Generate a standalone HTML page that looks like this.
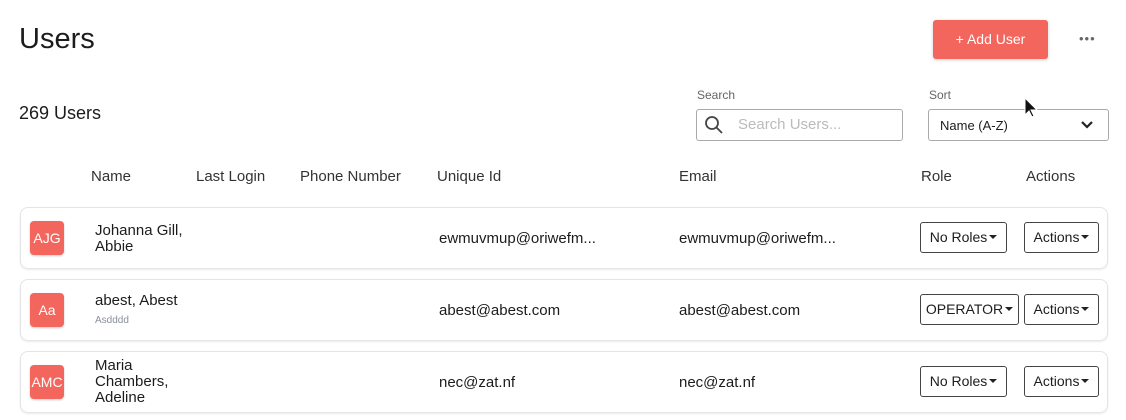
<!DOCTYPE html>
<html><head><style>
body{margin:0;width:1126px;height:420px;background:#fff;font-family:"Liberation Sans",sans-serif;color:#1c1c1c;position:relative;overflow:hidden}
.a{position:absolute;white-space:nowrap}
.h{font-size:15px;color:#333}
.row{position:absolute;left:20px;width:1086px;height:60px;border:1px solid #e3e4e8;border-radius:8px;box-shadow:0 1px 2px rgba(0,0,0,.08)}
.av{position:absolute;left:9px;top:13px;width:34px;height:34px;background:#f2665d;border-radius:4px;color:#fff;font-size:14px;text-align:center;line-height:34px;box-shadow:0 1px 2px rgba(0,0,0,.2)}
.t{font-size:15px;line-height:16px}
.btn{position:absolute;height:31px;border:1px solid #444;border-radius:3px;font-size:14px;line-height:29px;text-align:center;box-sizing:border-box}
.btn:after{content:"";display:inline-block;margin-left:2px;border:4px solid transparent;border-top:4px solid #222;vertical-align:-1px}
</style></head><body>
<div class="a" style="left:19px;top:23px;font-size:29px">Users</div>
<div class="a" style="left:933px;top:20px;width:115px;height:39px;background:#f2665d;border-radius:3px;color:#fff;font-size:14px;line-height:39px;text-align:center;box-shadow:0 1px 3px rgba(0,0,0,.2)">+ Add User</div>
<div class="a" style="left:1079px;top:31px;font-size:13px;color:#666;letter-spacing:1px">•••</div>
<div class="a" style="left:19px;top:103px;font-size:18px">269 Users</div>
<div class="a" style="left:697px;top:88px;font-size:12px;color:#666">Search</div>
<div class="a" style="left:696px;top:109px;width:205px;height:30px;border:1px solid #aaa;border-radius:3px"></div>
<svg class="a" style="left:704px;top:115px" width="20" height="20"><circle cx="8" cy="8" r="6" fill="none" stroke="#444" stroke-width="1.8"/><line x1="12.5" y1="12.5" x2="18" y2="18" stroke="#444" stroke-width="1.8"/></svg>
<div class="a" style="left:738px;top:116px;font-size:15px;color:#bbb">Search Users...</div>
<div class="a" style="left:929px;top:88px;font-size:12px;color:#666">Sort</div>
<div class="a" style="left:928px;top:109px;width:179px;height:30px;border:1px solid #aaa;border-radius:3px"></div>
<div class="a" style="left:940px;top:118px;font-size:13px">Name (A-Z)</div>
<svg class="a" style="left:1079px;top:119px" width="16" height="12"><path d="M3 3l5 5 5-5" fill="none" stroke="#222" stroke-width="2.2"/></svg>
<svg class="a" style="left:1024px;top:97px" width="14" height="22"><path d="M1 1v17l4-4 3 6 2-1-3-6h6z" fill="#111" stroke="#fff" stroke-width="1"/></svg>
<div class="a h" style="left:91px;top:168px">Name</div>
<div class="a h" style="left:196px;top:168px">Last Login</div>
<div class="a h" style="left:300px;top:168px">Phone Number</div>
<div class="a h" style="left:437px;top:168px">Unique Id</div>
<div class="a h" style="left:679px;top:168px">Email</div>
<div class="a h" style="left:921px;top:168px">Role</div>
<div class="a h" style="left:1026px;top:168px">Actions</div>

<div class="row" style="top:207px"><div class="av">AJG</div>
<div class="a t" style="left:74px;top:15px">Johanna Gill,<br>Abbie</div>
<div class="a t" style="left:418px;top:23px">ewmuvmup@oriwefm...</div>
<div class="a t" style="left:658px;top:23px">ewmuvmup@oriwefm...</div>
<div class="btn" style="left:899px;top:14px;width:87px">No Roles</div>
<div class="btn" style="left:1003px;top:14px;width:75px">Actions</div></div>

<div class="row" style="top:279px"><div class="av">Aa</div>
<div class="a t" style="left:74px;top:13px">abest, Abest</div>
<div class="a" style="left:74px;top:35px;font-size:10px;color:#8a8f99">Asdddd</div>
<div class="a t" style="left:418px;top:23px">abest@abest.com</div>
<div class="a t" style="left:658px;top:23px">abest@abest.com</div>
<div class="btn" style="left:899px;top:14px;width:99px">OPERATOR</div>
<div class="btn" style="left:1003px;top:14px;width:75px">Actions</div></div>

<div class="row" style="top:351px"><div class="av">AMC</div>
<div class="a t" style="left:74px;top:6px">Maria<br>Chambers,<br>Adeline</div>
<div class="a t" style="left:418px;top:23px">nec@zat.nf</div>
<div class="a t" style="left:658px;top:23px">nec@zat.nf</div>
<div class="btn" style="left:899px;top:14px;width:87px">No Roles</div>
<div class="btn" style="left:1003px;top:14px;width:75px">Actions</div></div>
</body></html>
